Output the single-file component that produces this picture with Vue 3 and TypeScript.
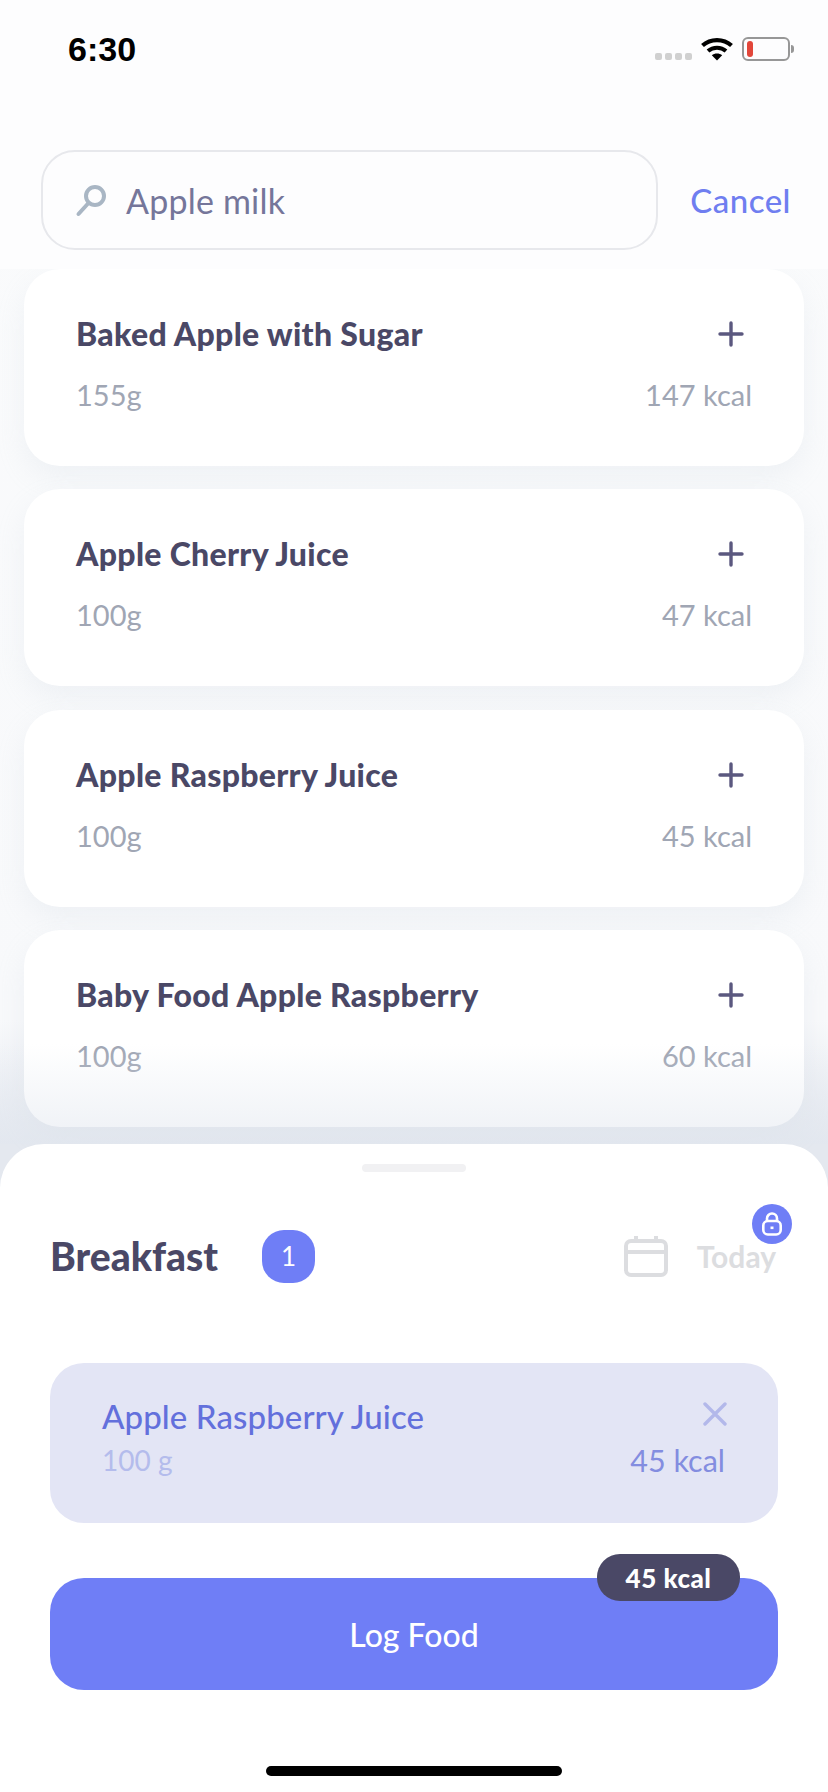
<script setup lang="ts">
interface Food { name: string; weight: string; kcal: string }
const foods: Food[] = [
  { name: 'Baked Apple with Sugar', weight: '155g', kcal: '147 kcal' },
  { name: 'Apple Cherry Juice', weight: '100g', kcal: '47 kcal' },
  { name: 'Apple Raspberry Juice', weight: '100g', kcal: '45 kcal' },
  { name: 'Baby Food Apple Raspberry', weight: '100g', kcal: '60 kcal' },
]
</script>

<template>
  <div class="screen">
    <header class="top">
      <div class="status">
        <span class="time">6:30</span>
        <div class="status-icons">
          <div class="dots"><i></i><i></i><i></i><i></i></div>
          <svg class="wifi" width="32" height="24" viewBox="0 0 32 24">
            <path d="M1.5 8.5C9.5 1.2 22.5 1.2 30.5 8.5" fill="none" stroke="#000" stroke-width="4.2" />
            <path d="M7 14C12 9.6 20 9.6 25 14" fill="none" stroke="#000" stroke-width="4" />
            <path d="M16 23.5L10.8 18.2C13.6 15.8 18.4 15.8 21.2 18.2Z" fill="#000" />
          </svg>
          <div class="battery"><b></b></div>
          <span class="battery-tip"></span>
        </div>
      </div>
      <div class="search-row">
        <div class="search">
          <svg width="34" height="34" viewBox="0 0 34 34" fill="none" stroke="#a9b6c4" stroke-width="4">
            <circle cx="20" cy="13" r="9" />
            <path d="M13.5 20L3.5 31" stroke-linecap="round" />
          </svg>
          <span>Apple milk</span>
        </div>
        <span class="cancel">Cancel</span>
      </div>
    </header>

    <main class="list">
      <article v-for="food in foods" :key="food.name" class="card">
        <div class="row">
          <h3>{{ food.name }}</h3>
          <svg width="26" height="26" viewBox="0 0 26 26" stroke="#5b587f" stroke-width="3.4" stroke-linecap="round">
            <path d="M13 2V24M2 13H24" />
          </svg>
        </div>
        <div class="row meta"><span>{{ food.weight }}</span><span>{{ food.kcal }}</span></div>
      </article>
    </main>

    <section class="sheet">
      <div class="fade"></div>
      <div class="handle"></div>
      <div class="meal">
        <h2>Breakfast</h2>
        <span class="count">1</span>
        <div class="date">
          <svg width="44" height="42" viewBox="0 0 44 42" fill="none" stroke="#dcdde0" stroke-width="4">
            <rect x="2" y="6" width="40" height="34" rx="5" />
            <path d="M2 17H42M12 1V8M32 1V8" />
          </svg>
          <span>Today</span>
          <div class="lock">
            <svg width="22" height="24" viewBox="0 0 22 24" fill="none" stroke="#fff" stroke-width="2.6">
              <rect x="2.3" y="9" width="17.4" height="13.5" rx="4.5" />
              <path d="M6 9V6.5a5 5 0 0 1 10 0V9" />
              <path d="M11 14.5v2.6" stroke-width="3" />
            </svg>
          </div>
        </div>
      </div>
      <div class="item">
        <div class="item-top">
          <span class="item-name">Apple Raspberry Juice</span>
          <svg class="remove" width="24" height="24" viewBox="0 0 24 24" stroke="#b3b8ea" stroke-width="3.4" stroke-linecap="round">
            <path d="M2 2L22 22M22 2L2 22" />
          </svg>
        </div>
        <div class="row item-meta"><span class="grams">100 g</span><span class="item-kcal">45 kcal</span></div>
      </div>
      <button class="log" type="button">
        Log Food
        <span class="pill">45 kcal</span>
      </button>
      <div class="home"></div>
    </section>
  </div>
</template>

<style scoped>
.screen {
  width: 828px;
  height: 1792px;
  position: relative;
  overflow: hidden;
  background: linear-gradient(to bottom, #fafbfc 0, #f8f9fb 1020px, #e4e8ef 1144px);
  font-family: Lato, "Open Sans", sans-serif;
  display: flex;
  flex-direction: column;
}
.top {
  height: 269px;
  background: #fdfdfe;
  flex: none;
  position: relative;
  z-index: 1;
}
.status {
  height: 100px;
  padding: 28px 34px 0 68px;
  box-sizing: border-box;
  display: flex;
  justify-content: space-between;
  align-items: flex-start;
}
.time {
  font: 700 34px/42px "Liberation Sans", Arial, sans-serif;
  color: #000;
}
.status-icons {
  display: flex;
  align-items: center;
  margin-top: 9px;
}
.dots {
  display: flex;
  gap: 3px;
  margin: 14px 9px 0 0;
}
.dots i {
  width: 7px;
  height: 7px;
  border-radius: 2px;
  background: #d0d0d0;
}
.wifi { margin-right: 9px; }
.battery {
  width: 48px;
  height: 24px;
  box-sizing: border-box;
  border: 2px solid #979797;
  border-radius: 6px;
  padding: 2px 3px;
}
.battery b {
  display: block;
  width: 6px;
  height: 100%;
  border-radius: 3px;
  background: #e2463a;
}
.battery-tip {
  width: 3px;
  height: 8px;
  margin-left: 1px;
  border-radius: 0 3px 3px 0;
  background: #979797;
}
.search-row {
  display: flex;
  align-items: center;
  margin: 50px 37px 0 41px;
}
.search {
  width: 617px;
  height: 100px;
  box-sizing: border-box;
  border: 2px solid #e7e8ec;
  border-radius: 34px;
  display: flex;
  align-items: center;
  gap: 17px;
  padding-left: 32px;
  font-size: 34px;
  letter-spacing: 0.2px;
  color: #75769a;
  flex: none;
}
.search svg { flex: none; }
.cancel {
  margin-left: auto;
  font-size: 33px;
  letter-spacing: 0.5px;
  font-weight: 500;
  color: #6f7ef0;
}
.list {
  padding: 0 24px;
  display: flex;
  flex-direction: column;
  gap: 23.4px;
  flex: none;
  height: 875px;
  box-sizing: border-box;
}
.card {
  height: 197px;
  box-sizing: border-box;
  background: #fff;
  border-radius: 36px;
  padding: 45px 52px 0;
  flex: none;
  box-shadow: 0 12px 28px rgba(186, 197, 214, 0.16);
}
.row {
  display: flex;
  justify-content: space-between;
  align-items: center;
}
h3 {
  margin: 0;
  font-size: 32px;
  letter-spacing: 0.3px;
  line-height: 40px;
  font-weight: 900;
  color: #4a4866;
}
.meta {
  margin-top: 22px;
  font-size: 29px;
  line-height: 38px;
  color: #a0a6b4;
}
.card .row svg { margin-right: 8px; }
.sheet {
  flex: 1;
  position: relative;
  background: #fff;
  border-radius: 44px 44px 0 0;
  padding: 20px 50px 0;
}
.fade {
  position: absolute;
  left: 0;
  right: 0;
  top: -100px;
  height: 100px;
  pointer-events: none;
  background: linear-gradient(to bottom, rgba(226, 231, 239, 0), rgba(226, 231, 239, 0.6));
}
.handle {
  width: 104px;
  height: 8px;
  margin: 0 auto;
  border-radius: 4px;
  background: #f1f1f3;
}
.meal {
  display: flex;
  align-items: center;
  height: 54px;
  margin-top: 57px;
}
h2 {
  margin: 0;
  font-size: 39px;
  font-weight: 900;
  color: #4a4866;
  padding-left: 0;
}
.count {
  width: 53px;
  height: 53px;
  margin-left: 44px;
  border-radius: 22px;
  background: #6f7ef6;
  color: #fff;
  font-size: 26px;
  display: flex;
  align-items: center;
  justify-content: center;
}
.date {
  margin-left: auto;
  display: flex;
  align-items: center;
  gap: 29px;
  position: relative;
  padding-right: 2px;
}
.date span {
  font-size: 30px;
  font-weight: 700;
  color: #dcdde0;
}
.lock {
  position: absolute;
  right: -14px;
  top: -31px;
  width: 40px;
  height: 40px;
  border-radius: 50%;
  background: #6f7ef6;
  display: flex;
  align-items: center;
  justify-content: center;
}
.item {
  height: 160px;
  margin-top: 80px;
  box-sizing: border-box;
  border-radius: 34px;
  background: #e3e5f5;
  padding: 31px 53px 0 52px;
}
.item-top {
  display: flex;
  justify-content: space-between;
  align-items: flex-start;
  height: 44px;
}
.remove { margin: 8px -2px 0 0; }
.item-name {
  font-size: 33px;
  letter-spacing: 0.1px;
  line-height: 44px;
  font-weight: 500;
  color: #6370dc;
}
.item-meta {
  margin-top: 4px;
  font-size: 28px;
}
.grams { color: #b4bcec; }
.item-kcal { color: #838de0; font-size: 30.5px; }
.log {
  display: block;
  position: relative;
  width: 100%;
  height: 112px;
  margin-top: 55px;
  border: 0;
  border-radius: 34px;
  background: #6f7ef6;
  color: #fff;
  font-family: inherit;
  font-size: 32px;
  font-weight: 500;
}
.pill {
  position: absolute;
  right: 38px;
  top: -24px;
  width: 143px;
  height: 47px;
  border-radius: 23px;
  background: #4a4866;
  color: #fff;
  font-size: 26px;
  letter-spacing: 0.5px;
  font-weight: 900;
  display: flex;
  align-items: center;
  justify-content: center;
}
.home {
  position: absolute;
  left: 266px;
  bottom: 16px;
  width: 296px;
  height: 10px;
  border-radius: 5px;
  background: #000;
}
</style>
